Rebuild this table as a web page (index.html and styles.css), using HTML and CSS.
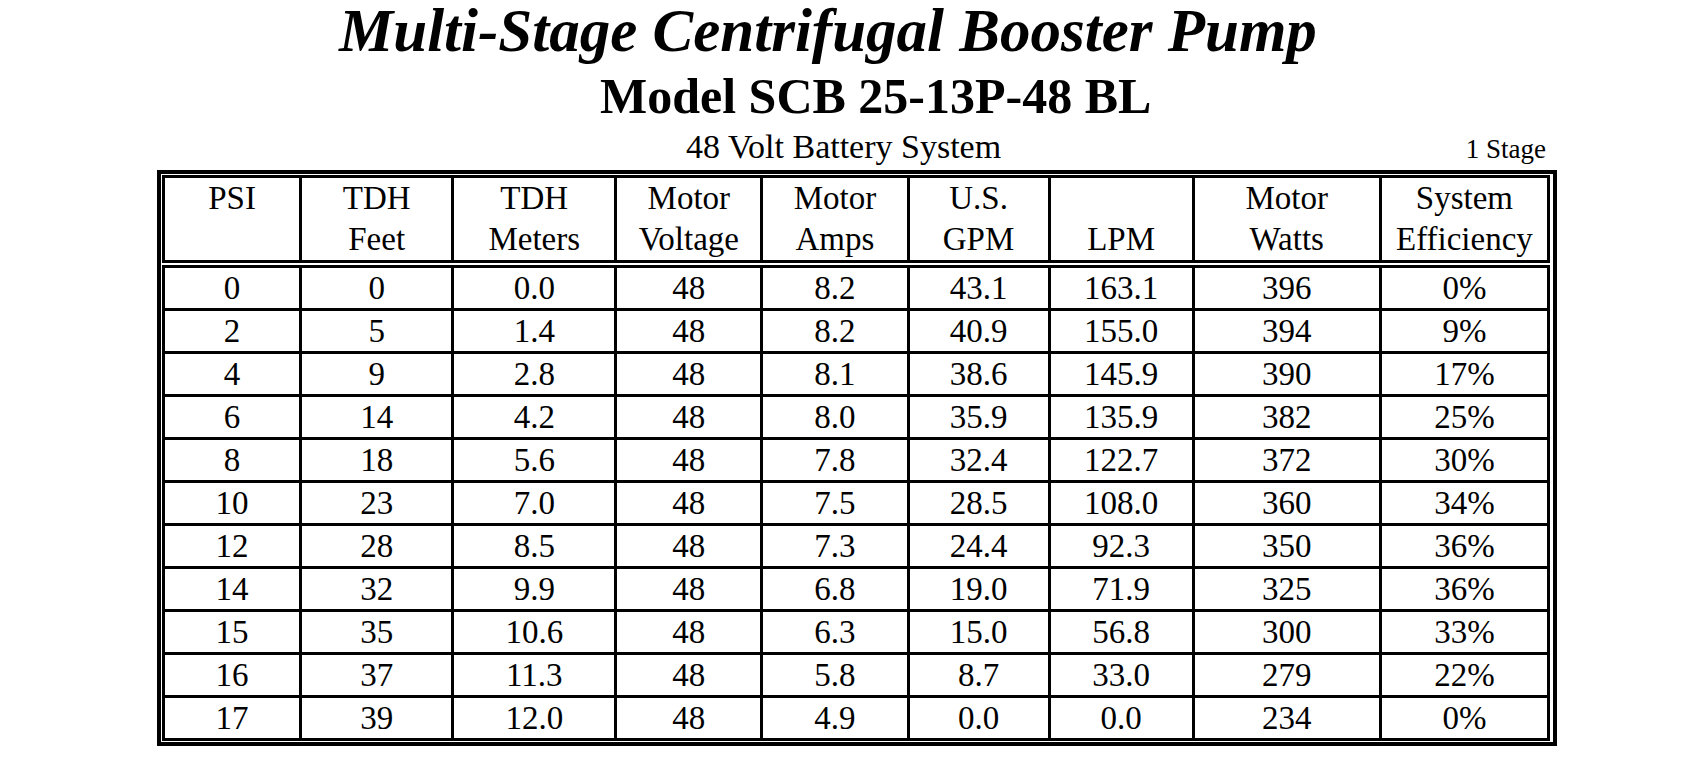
FILE: index.html
```html
<!DOCTYPE html>
<html lang="en">
<head>
<meta charset="utf-8">
<title>Multi-Stage Centrifugal Booster Pump</title>
<link rel="stylesheet" href="styles.css">
</head>
<body>
<main class="sheet">
  <h1 class="title">Multi-Stage Centrifugal Booster Pump</h1>
  <h2 class="model">Model SCB 25-13P-48 BL</h2>
  <div class="caption-row">
    <span class="system">48 Volt Battery System</span>
    <span class="stage">1 Stage</span>
  </div>
  <div class="frame">
    <table class="perf">
      <thead>
        <tr>
          <th class="c1">PSI</th>
          <th class="c2">TDH<br>Feet</th>
          <th class="c3">TDH<br>Meters</th>
          <th class="c4">Motor<br>Voltage</th>
          <th class="c5">Motor<br>Amps</th>
          <th class="c6">U.S.<br>GPM</th>
          <th class="c7 low">LPM</th>
          <th class="c8">Motor<br>Watts</th>
          <th class="c9">System<br>Efficiency</th>
        </tr>
      </thead>
      <tbody>
        <tr><td>0</td><td>0</td><td>0.0</td><td>48</td><td>8.2</td><td>43.1</td><td>163.1</td><td>396</td><td>0%</td></tr>
        <tr><td>2</td><td>5</td><td>1.4</td><td>48</td><td>8.2</td><td>40.9</td><td>155.0</td><td>394</td><td>9%</td></tr>
        <tr><td>4</td><td>9</td><td>2.8</td><td>48</td><td>8.1</td><td>38.6</td><td>145.9</td><td>390</td><td>17%</td></tr>
        <tr><td>6</td><td>14</td><td>4.2</td><td>48</td><td>8.0</td><td>35.9</td><td>135.9</td><td>382</td><td>25%</td></tr>
        <tr><td>8</td><td>18</td><td>5.6</td><td>48</td><td>7.8</td><td>32.4</td><td>122.7</td><td>372</td><td>30%</td></tr>
        <tr><td>10</td><td>23</td><td>7.0</td><td>48</td><td>7.5</td><td>28.5</td><td>108.0</td><td>360</td><td>34%</td></tr>
        <tr><td>12</td><td>28</td><td>8.5</td><td>48</td><td>7.3</td><td>24.4</td><td>92.3</td><td>350</td><td>36%</td></tr>
        <tr><td>14</td><td>32</td><td>9.9</td><td>48</td><td>6.8</td><td>19.0</td><td>71.9</td><td>325</td><td>36%</td></tr>
        <tr><td>15</td><td>35</td><td>10.6</td><td>48</td><td>6.3</td><td>15.0</td><td>56.8</td><td>300</td><td>33%</td></tr>
        <tr><td>16</td><td>37</td><td>11.3</td><td>48</td><td>5.8</td><td>8.7</td><td>33.0</td><td>279</td><td>22%</td></tr>
        <tr><td>17</td><td>39</td><td>12.0</td><td>48</td><td>4.9</td><td>0.0</td><td>0.0</td><td>234</td><td>0%</td></tr>
      </tbody>
    </table>
  </div>
</main>
</body>
</html>
```
FILE: styles.css
```css
html, body {
  margin: 0;
  padding: 0;
  background: #ffffff;
  color: #000000;
  font-family: "Liberation Serif", "Times New Roman", serif;
}

.sheet {
  width: 1700px;
  height: 758px;
  overflow: hidden;
}

.title {
  margin: 0;
  padding-left: 339px;
  font-size: 61px;
  line-height: 61px;
  font-weight: bold;
  font-style: italic;
  white-space: nowrap;
}

.model {
  margin: 10px 0 0;
  padding-left: 600px;
  font-size: 50px;
  line-height: 50px;
  font-weight: bold;
  white-space: nowrap;
}

.caption-row {
  display: flex;
  align-items: baseline;
  margin: 9px 0 0 157px;
  width: 1398px;
  white-space: nowrap;
}

.system {
  margin-left: 529px;
  font-size: 34px;
  line-height: 33px;
}

.stage {
  margin-left: auto;
  margin-right: 9px;
  font-size: 27px;
  line-height: 33px;
}

.frame {
  margin: 4px 0 0 157px;
  width: 1390px;
  border: 4px solid #000000;
  padding: 1px;
}

.perf {
  width: 1388px;
  border-collapse: collapse;
  table-layout: fixed;
  border: 3px solid #000000;
}

.perf th,
.perf td {
  border: 3px solid #000000;
  padding: 0;
  text-align: center;
  font-size: 33px;
  font-weight: normal;
  white-space: nowrap;
}

.perf th {
  height: 82px;
  line-height: 41px;
  vertical-align: top;
  border-bottom: 8px double #000000;
}

.perf th.low {
  vertical-align: bottom;
}

.perf td {
  height: 40px;
  line-height: 40px;
}

.c1 { width: 134px; }
.c2 { width: 149px; }
.c3 { width: 160px; }
.c4 { width: 143px; }
.c5 { width: 143px; }
.c6 { width: 138px; }
.c7 { width: 141px; }
.c8 { width: 184px; }
.c9 { width: 165px; }
```
